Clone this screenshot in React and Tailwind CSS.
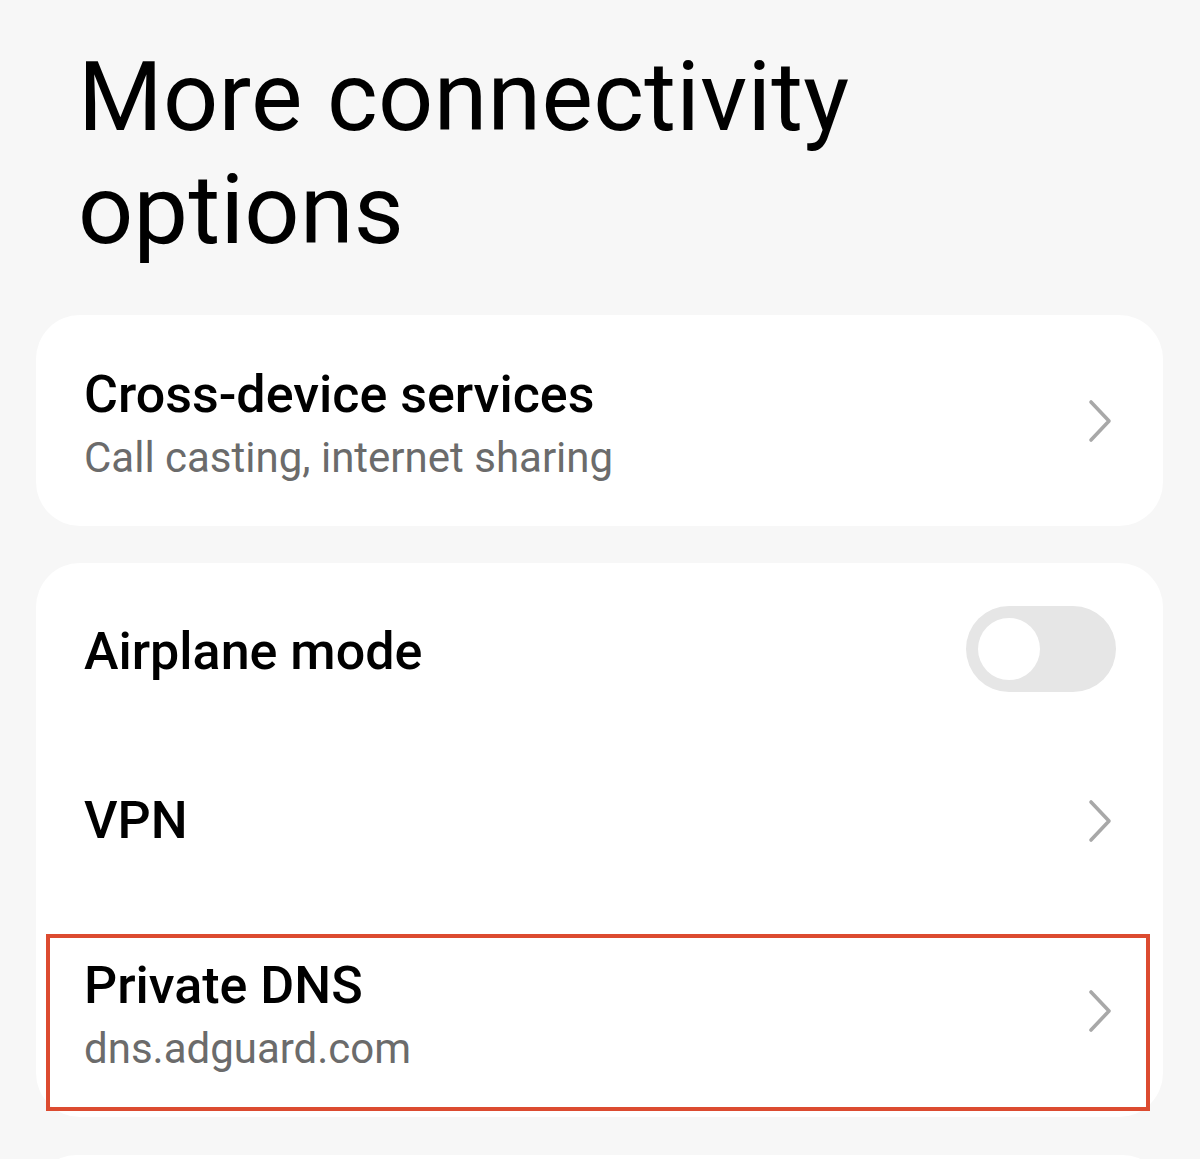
import React from "react";

function Chevron() {
  return (
    <svg width="24" height="44" viewBox="0 0 24 44" fill="none" className="shrink-0">
      <path d="M3 3 L21 22 L3 41" stroke="#a8a8a8" strokeWidth="3.6" strokeLinecap="round" strokeLinejoin="round" />
    </svg>
  );
}

function Toggle() {
  return (
    <div className="relative w-[150px] h-[86px] rounded-full bg-[#e6e6e6] shrink-0">
      <div className="absolute left-[12px] top-[12px] w-[62px] h-[62px] rounded-full bg-white" />
    </div>
  );
}

export default function App() {
  const font = { fontFamily: "Roboto, 'Noto Sans', sans-serif" };
  return (
    <div className="h-[1159px] w-[1200px] bg-[#f7f7f7] overflow-hidden" style={font}>
      <h1 className="pl-[78px] pt-[41px] text-[97px] leading-[113px] font-normal text-black tracking-[0.3px]">
        More connectivity
        <br />
        options
      </h1>

      <div className="mt-[48px] mx-[36px] w-[1127px] h-[211px] bg-white rounded-[44px] flex items-center justify-between pl-[48px] pr-[51px]">
        <div className="mt-[15px] flex flex-col">
          <div className="text-[52px] leading-[60px] font-medium text-black">Cross-device services</div>
          <div className="text-[42px] leading-[66px] text-[#6b6b6b]">Call casting, internet sharing</div>
        </div>
        <Chevron />
      </div>

      <div className="mt-[37px] mx-[36px] w-[1127px] h-[554px] bg-white rounded-[44px] flex flex-col">
        <div className="h-[172px] flex items-center justify-between pl-[48px] pr-[47px]">
          <div className="pt-[6px] text-[52px] leading-[60px] font-medium text-black">Airplane mode</div>
          <Toggle />
        </div>
        <div className="h-[172px] flex items-center justify-between pl-[48px] pr-[51px]">
          <div className="text-[52px] leading-[60px] font-medium text-black">VPN</div>
          <Chevron />
        </div>
        <div className="mt-[27px] ml-[10px] w-[1104px] h-[177px] border-4 border-[#dc4b30] flex items-center justify-between pl-[34px] pr-[34px] pb-[23px]">
          <div className="mt-[15px] flex flex-col">
            <div className="text-[52px] leading-[60px] font-medium text-black">Private DNS</div>
            <div className="text-[42px] leading-[66px] text-[#6b6b6b]">dns.adguard.com</div>
          </div>
          <Chevron />
        </div>
      </div>

      <div className="mt-[38px] mx-[36px] w-[1127px] h-[40px] bg-white rounded-t-[44px]" />
    </div>
  );
}
